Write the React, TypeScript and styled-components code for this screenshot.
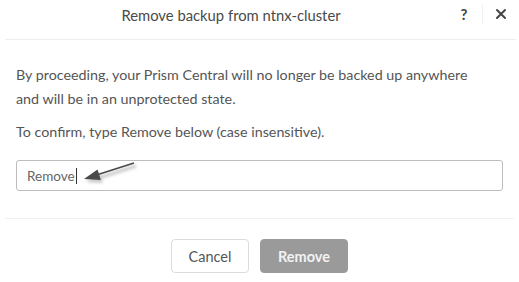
import React from "react";
import styled, { createGlobalStyle } from "styled-components";

const Global = createGlobalStyle`
  html, body { margin: 0; padding: 0; background: #fff; }
  body { font-family: Lato, "Open Sans", sans-serif; color: #555; }
`;

const Dialog = styled.div`
  width: 519px;
  height: 282px;
  background: #fff;
  display: flex;
  flex-direction: column;
  overflow: hidden;
`;

const Header = styled.div`
  height: 40px;
  display: flex;
  align-items: center;
  margin: 0 3px 0 5px;
  border-bottom: 1px solid #eeeeee;
  box-sizing: border-box;
`;

const Title = styled.div`
  flex: 1;
  text-align: center;
  font-size: 14.8px;
  color: #4a4a4a;
  padding-left: 5px;
  padding-bottom: 10px;
`;

const Actions = styled.div`
  width: 64px;
  display: flex;
  align-items: center;
  height: 100%;
  padding-bottom: 12px;
  box-sizing: border-box;
`;

const IconBtn = styled.span`
  width: 24px;
  display: flex;
  justify-content: center;
  font-size: 15px;
  font-weight: 700;
  color: #444;
`;

const Divider = styled.span`
  width: 1px;
  height: 20px;
  background: #f0f0f0;
  margin: 0 6px;
`;

const Body = styled.div`
  padding: 23px 16px 0 16px;
  flex: 1;
  position: relative;
`;

const Para = styled.p`
  margin: 0;
  font-size: 14.3px;
  line-height: 24px;
  color: #555;
`;

const Confirm = styled(Para)`
  margin-top: 9px;
`;

const InputWrap = styled.div`
  margin-top: 16px;
  position: relative;
`;

const Input = styled.div`
  height: 31px;
  border: 1.5px solid #bdbdbd;
  border-radius: 3px;
  box-sizing: border-box;
  display: flex;
  align-items: center;
  padding-left: 10px;
  font-size: 13.5px;
  color: #666;
`;

const Caret = styled.span`
  display: inline-block;
  width: 1px;
  height: 16px;
  background: #333;
  margin-left: 1px;
`;

const Arrow = styled.svg`
  position: absolute;
  left: 58px;
  top: 0px;
  overflow: visible;
`;

const Footer = styled.div`
  margin: 0 5px;
  border-top: 1px solid #f0f0f0;
  height: 64px;
  display: flex;
  justify-content: center;
  align-items: flex-start;
  padding-top: 20px;
  gap: 11px;
  box-sizing: border-box;
`;

const Button = styled.button<{ $primary?: boolean }>`
  height: 34px;
  width: ${(p) => (p.$primary ? "88px" : "78px")};
  border-radius: 4px;
  font-family: Lato, "Open Sans", sans-serif;
  font-size: 14.5px;
  border: 1.5px solid ${(p) => (p.$primary ? "#9a9a9a" : "#dcdcdc")};
  background: ${(p) => (p.$primary ? "#9a9a9a" : "#fff")};
  color: ${(p) => (p.$primary ? "#f2f2f2" : "#555")};
  font-weight: ${(p) => (p.$primary ? 700 : 400)};
  cursor: pointer;
`;

export default function App() {
  return (
    <>
      <Global />
      <Dialog>
        <Header>
          <Title>Remove backup from ntnx-cluster</Title>
          <Actions>
            <IconBtn>?</IconBtn>
            <Divider />
            <IconBtn>
              <svg width="12" height="12" viewBox="0 0 12 12">
                <path d="M2 2 L10 10 M10 2 L2 10" stroke="#444" strokeWidth="2" strokeLinecap="round" />
              </svg>
            </IconBtn>
          </Actions>
        </Header>
        <Body>
          <Para>
            By proceeding, your Prism Central will no longer be backed up anywhere
            <br />
            and will be in an unprotected state.
          </Para>
          <Confirm>To confirm, type Remove below (case insensitive).</Confirm>
          <InputWrap>
            <Input>
              Remove
              <Caret />
            </Input>
            <Arrow width="80" height="30" viewBox="0 0 80 30">
              <defs>
                <filter id="sh" x="-20%" y="-50%" width="140%" height="200%">
                  <feGaussianBlur stdDeviation="1.6" />
                </filter>
              </defs>
              <g filter="url(#sh)" opacity="0.4" transform="translate(2,3)">
                <path d="M60 3 L24 14.5" stroke="#777" strokeWidth="3" />
                <path d="M10 19 L23.5 9.4 L26.8 20 Z" fill="#777" />
              </g>
              <path d="M60 3 L24 14.5" stroke="#4a4a4a" strokeWidth="1.6" />
              <path d="M10 19 L23.5 9.4 L26.8 20 Z" fill="#4a4a4a" />
            </Arrow>
          </InputWrap>
        </Body>
        <Footer>
          <Button>Cancel</Button>
          <Button $primary>Remove</Button>
        </Footer>
      </Dialog>
    </>
  );
}
